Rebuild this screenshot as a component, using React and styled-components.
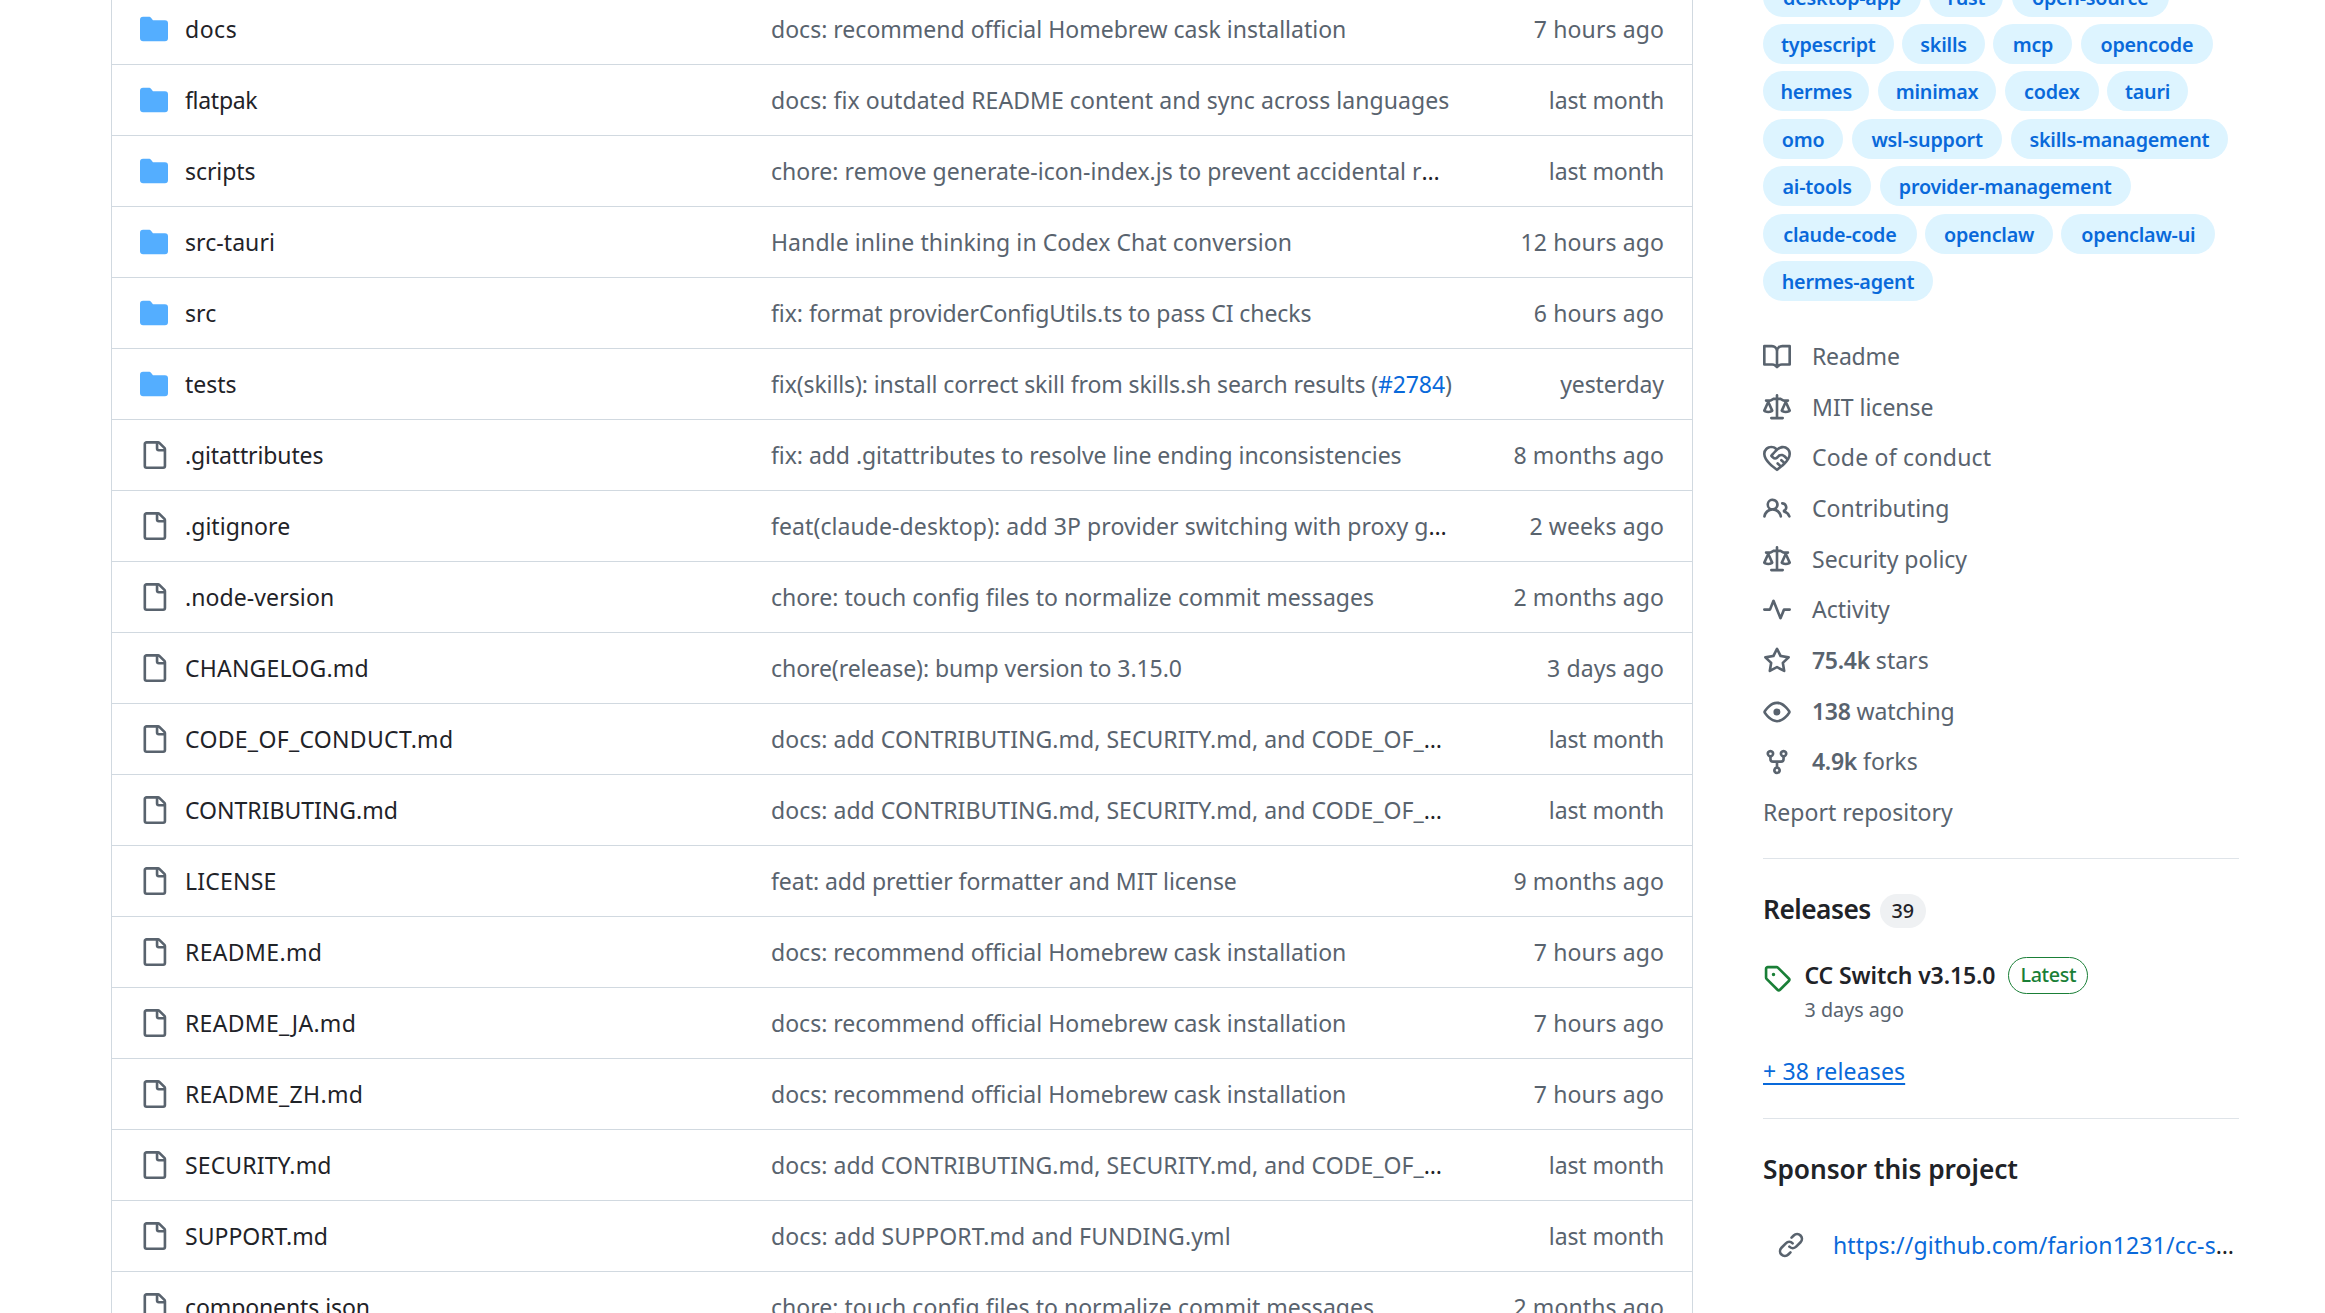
import React from "react";
import styled, { createGlobalStyle } from "styled-components";

const GlobalStyle = createGlobalStyle`
  * {
    box-sizing: border-box;
  }
  body {
    margin: 0;
    background: #fff;
    color: #1f2328;
    font-family: "Noto Sans", "Open Sans", sans-serif;
    font-size: 23.03px;
    line-height: 36px;
    overflow: hidden;
  }
`;

const Page = styled.div`
  display: flex;
  gap: 70px;
  height: 1313px;
  padding-left: 111px;
  overflow: hidden;
`;

const FileTable = styled.div`
  width: 1582px;
  height: 1355px;
  flex: none;
  margin-top: -6px;
  border: 1px solid #d1d9e0;
  border-width: 0 1px;
`;

const FileRow = styled.div`
  display: grid;
  grid-template-columns: 29px 570px 1fr 180px;
  column-gap: 16px;
  align-items: center;
  height: 71px;
  padding: 0 28px;
  border-bottom: 1px solid #d1d9e0;
`;

const Tracked = styled.span`
  letter-spacing: ${({ $track }) => $track || 0}px;
  white-space: nowrap;
`;

const Message = styled.div`
  white-space: nowrap;
`;

const Muted = styled(Tracked)`
  color: #59636e;
`;

const Age = styled(Muted)`
  text-align: right;
`;

const Link = styled.a`
  color: #0969da;
  letter-spacing: ${({ $track }) => ($track ? `${$track}px` : "inherit")};
`;

const Svg = styled.svg`
  display: block;
  flex: none;
  width: 28px;
  height: 28px;
  fill: ${({ $color }) => $color || "#59636e"};
`;

const Sidebar = styled.aside`
  width: 476px;
  flex: none;
`;

const Topics = styled.div`
  display: flex;
  flex-wrap: wrap;
  gap: 7.4px 8.4px;
  margin-top: -23.4px;
`;

const Topic = styled.a`
  width: ${({ $width }) => $width}px;
  height: 40px;
  padding-top: 1px;
  border-radius: 20px;
  background: #ddf4ff;
  color: #0969da;
  font-size: 19.74px;
  font-weight: 600;
  line-height: 40px;
  letter-spacing: -0.23px;
  text-align: center;
  white-space: nowrap;
`;

const InfoList = styled.div`
  margin-top: 30.6px;
`;

const InfoRow = styled.div`
  display: flex;
  align-items: center;
  gap: 21px;
  height: 50.7px;
  color: #59636e;
  & > span {
    margin-top: -2px;
  }
  & b {
    font-weight: 600;
    letter-spacing: -0.3px;
  }
`;

const Section = styled.section`
  height: ${({ $height }) => $height}px;
  margin-top: ${({ $gap }) => $gap || 0}px;
  border-top: 1px solid #dfe4e9;
`;

const Heading = styled.h2`
  display: flex;
  align-items: center;
  gap: 9px;
  height: 36px;
  margin: 32px 0 0;
  font-size: 26.3px;
  font-weight: 600;
  letter-spacing: ${({ $track }) => $track}px;
`;

const Counter = styled.span`
  width: 46px;
  height: 34px;
  margin-top: 4px;
  border-radius: 17px;
  background: #eff1f3;
  font-size: 19.74px;
  font-weight: 500;
  line-height: 34px;
  letter-spacing: 0;
  text-align: center;
`;

const Release = styled.div`
  display: flex;
  gap: 13.5px;
  margin-top: 30px;
  & > svg {
    margin-top: 7px;
  }
`;

const ReleaseTitle = styled.div`
  display: flex;
  align-items: center;
  gap: 13px;
  height: 37px;
  font-weight: 600;
`;

const Latest = styled.span`
  width: 80px;
  height: 37px;
  border: 1px solid #1a7f37;
  border-radius: 19px;
  color: #1a7f37;
  font-size: 19.74px;
  font-weight: 500;
  line-height: 33px;
  letter-spacing: -0.4px;
  text-align: center;
`;

const ReleaseDate = styled.div`
  color: #59636e;
  font-size: 19.74px;
  line-height: 32px;
`;

const MoreLink = styled.a`
  display: block;
  width: fit-content;
  margin-top: 27.5px;
  color: #0969da;
  letter-spacing: 0.14px;
  text-decoration: underline;
  text-decoration-thickness: 2px;
  text-underline-offset: 3px;
`;

const SponsorRow = styled.div`
  display: flex;
  align-items: center;
  gap: 28px;
  margin-top: 40.5px;
  padding-left: 14px;
  white-space: nowrap;
`;

const paths = {
  folder:
    "M1.75 1A1.75 1.75 0 0 0 0 2.75v10.5C0 14.216.784 15 1.75 15h12.5A1.75 1.75 0 0 0 16 13.25v-8.5A1.75 1.75 0 0 0 14.25 3H7.5a.25.25 0 0 1-.2-.1l-.9-1.2C6.07 1.26 5.55 1 5 1H1.75Z",
  file: "M2 1.75C2 .784 2.784 0 3.75 0h6.586c.464 0 .909.184 1.237.513l2.914 2.914c.329.328.513.773.513 1.237v9.586A1.75 1.75 0 0 1 13.25 16h-9.5A1.75 1.75 0 0 1 2 14.25Zm1.75-.25a.25.25 0 0 0-.25.25v12.5c0 .138.112.25.25.25h9.5a.25.25 0 0 0 .25-.25V6h-2.75A1.75 1.75 0 0 1 9 4.25V1.5Zm6.75.062V4.25c0 .138.112.25.25.25h2.688l-.011-.013-2.914-2.914-.013-.011Z",
  book: "M0 1.75A.75.75 0 0 1 .75 1h4.253c1.227 0 2.317.59 3 1.501A3.743 3.743 0 0 1 11.006 1h4.245a.75.75 0 0 1 .75.75v10.5a.75.75 0 0 1-.75.75h-4.507a2.25 2.25 0 0 0-1.591.659l-.622.621a.75.75 0 0 1-1.06 0l-.622-.621A2.25 2.25 0 0 0 5.258 13H.75a.75.75 0 0 1-.75-.75Zm7.251 10.324.004-5.073-.002-2.253A2.25 2.25 0 0 0 5.003 2.5H1.5v9h3.757a3.75 3.75 0 0 1 1.994.574ZM8.755 4.75l-.004 7.322a3.752 3.752 0 0 1 1.992-.572H14.5v-9h-3.495a2.25 2.25 0 0 0-2.25 2.25Z",
  law: "M8.75.75V2h.985c.304 0 .603.08.867.231l1.29.736c.038.022.08.033.124.033h2.234a.75.75 0 0 1 0 1.5h-.427l2.111 4.692a.75.75 0 0 1-.154.838l-.53-.53.529.531-.001.002-.002.002-.006.006-.006.005-.01.01-.045.04c-.21.176-.441.327-.686.45C14.556 10.78 13.88 11 13 11a4.498 4.498 0 0 1-2.023-.454 3.544 3.544 0 0 1-.686-.45l-.045-.04-.016-.015-.006-.006-.004-.004v-.001a.75.75 0 0 1-.154-.838L12.178 4.5h-.162c-.305 0-.604-.079-.868-.231l-1.29-.736a.245.245 0 0 0-.124-.033H8.75V13h2.5a.75.75 0 0 1 0 1.5h-6.5a.75.75 0 0 1 0-1.5h2.5V3.5h-.984a.245.245 0 0 0-.124.033l-1.289.737c-.265.15-.564.23-.869.23h-.162l2.112 4.692a.75.75 0 0 1-.154.838l-.53-.53.529.531-.001.002-.002.002-.006.006-.016.015-.045.04c-.21.176-.441.327-.686.45C4.556 10.78 3.88 11 3 11a4.498 4.498 0 0 1-2.023-.454 3.544 3.544 0 0 1-.686-.45l-.045-.04-.016-.015-.006-.006-.004-.004v-.001a.75.75 0 0 1-.154-.838L2.178 4.5H1.75a.75.75 0 0 1 0-1.5h2.234a.249.249 0 0 0 .125-.033l1.288-.737c.265-.15.564-.23.869-.23h.984V.75a.75.75 0 0 1 1.5 0Zm2.945 8.477c.285.135.718.273 1.305.273s1.02-.138 1.305-.273L13 6.327Zm-10 0c.285.135.718.273 1.305.273s1.02-.138 1.305-.273L3 6.327Z",
  conduct:
    "M8.048 2.241c.964-.709 2.079-1.238 3.325-1.241a4.616 4.616 0 0 1 3.282 1.355c.41.408.757.86.996 1.428.238.568.348 1.206.347 1.968 0 2.193-1.505 4.254-3.081 5.862-1.496 1.526-3.213 2.796-4.249 3.563l-.22.163a.749.749 0 0 1-.895 0l-.221-.163c-1.036-.767-2.753-2.037-4.249-3.563C1.51 10.008.007 7.952.002 5.762a4.614 4.614 0 0 1 1.353-3.407C3.123.585 6.223.537 8.048 2.24Zm-1.153.983c-1.25-1.033-3.321-.967-4.48.191a3.115 3.115 0 0 0-.913 2.335c0 1.556 1.109 3.24 2.652 4.813C5.463 11.898 6.96 13.032 8 13.805c.353-.262.758-.565 1.191-.905l-1.326-1.223a.75.75 0 0 1 1.018-1.102l1.48 1.366c.328-.281.659-.577.984-.887L9.99 9.802a.75.75 0 1 1 1.019-1.103l1.384 1.28c.295-.329.566-.661.81-.995L12.92 8.7l-1.167-1.168c-.674-.671-1.78-.664-2.474.03-.268.269-.538.537-.802.797-.893.882-2.319.843-3.185-.032-.346-.35-.693-.697-1.043-1.047a.75.75 0 0 1-.04-1.016c.162-.191.336-.401.52-.623.62-.748 1.356-1.637 2.166-2.417Zm7.112 4.442c.313-.65.491-1.293.491-1.916v-.001c0-.614-.088-1.045-.23-1.385-.143-.339-.357-.633-.673-.949a3.111 3.111 0 0 0-2.218-.915c-1.092.003-2.165.627-3.226 1.602-.823.755-1.554 1.637-2.228 2.45l-.127.154.562.566a.755.755 0 0 0 1.066.02l.794-.79c1.258-1.258 3.312-1.31 4.594-.032.396.394.792.791 1.173 1.173Z",
  people:
    "M2 5.5a3.5 3.5 0 1 1 5.898 2.549 5.508 5.508 0 0 1 3.034 4.084.75.75 0 1 1-1.482.235 4 4 0 0 0-7.9 0 .75.75 0 0 1-1.482-.236A5.507 5.507 0 0 1 3.102 8.05 3.493 3.493 0 0 1 2 5.5ZM11 4a3.001 3.001 0 0 1 2.22 5.018 5.01 5.01 0 0 1 2.56 3.012.749.749 0 0 1-.885.954.752.752 0 0 1-.549-.514 3.507 3.507 0 0 0-2.522-2.372.75.75 0 0 1-.574-.73v-.352a.75.75 0 0 1 .416-.672A1.5 1.5 0 0 0 11 5.5.75.75 0 0 1 11 4Zm-5.5-.5a2 2 0 1 0-.001 3.999A2 2 0 0 0 5.5 3.5Z",
  pulse:
    "M6 2c.306 0 .582.187.696.471L10 10.731l1.304-3.26A.751.751 0 0 1 12 7h3.25a.75.75 0 0 1 0 1.5h-2.742l-1.812 4.528a.751.751 0 0 1-1.392 0L6 4.77 4.696 8.03A.75.75 0 0 1 4 8.5H.75a.75.75 0 0 1 0-1.5h2.742l1.812-4.529A.751.751 0 0 1 6 2Z",
  star: "M8 .25a.75.75 0 0 1 .673.418l1.882 3.815 4.21.612a.75.75 0 0 1 .416 1.279l-3.046 2.97.719 4.192a.751.751 0 0 1-1.088.791L8 12.347l-3.766 1.98a.75.75 0 0 1-1.088-.79l.72-4.194L.818 6.374a.75.75 0 0 1 .416-1.28l4.21-.611L7.327.668A.75.75 0 0 1 8 .25Zm0 2.445L6.615 5.5a.75.75 0 0 1-.564.41l-3.097.45 2.24 2.184a.75.75 0 0 1 .216.664l-.528 3.084 2.769-1.456a.75.75 0 0 1 .698 0l2.77 1.456-.53-3.084a.75.75 0 0 1 .216-.664l2.24-2.183-3.096-.45a.75.75 0 0 1-.564-.41L8 2.694Z",
  eye: "M8 2c1.981 0 3.671.992 4.933 2.078 1.27 1.091 2.187 2.345 2.637 3.023a1.62 1.62 0 0 1 0 1.798c-.45.678-1.367 1.932-2.637 3.023C11.67 13.008 9.981 14 8 14c-1.981 0-3.671-.992-4.933-2.078C1.797 10.83.88 9.576.43 8.898a1.62 1.62 0 0 1 0-1.798c.45-.677 1.367-1.931 2.637-3.022C4.33 2.992 6.019 2 8 2ZM1.679 7.932a.12.12 0 0 0 0 .136c.411.622 1.241 1.75 2.366 2.717C5.176 11.758 6.527 12.5 8 12.5c1.473 0 2.825-.742 3.955-1.715 1.124-.967 1.954-2.096 2.366-2.717a.12.12 0 0 0 0-.136c-.412-.621-1.242-1.75-2.366-2.717C10.824 4.242 9.473 3.5 8 3.5c-1.473 0-2.825.742-3.955 1.715-1.124.967-1.954 2.096-2.366 2.717ZM8 10a2 2 0 1 1-.001-3.999A2 2 0 0 1 8 10Z",
  fork: "M5 5.372v.878c0 .414.336.75.75.75h4.5a.75.75 0 0 0 .75-.75v-.878a2.25 2.25 0 1 1 1.5 0v.878a2.25 2.25 0 0 1-2.25 2.25h-1.5v2.128a2.251 2.251 0 1 1-1.5 0V8.5h-1.5A2.25 2.25 0 0 1 3.5 6.25v-.878a2.25 2.25 0 1 1 1.5 0ZM5 3.25a.75.75 0 1 0-1.5 0 .75.75 0 0 0 1.5 0Zm6.75.75a.75.75 0 1 0 0-1.5.75.75 0 0 0 0 1.5Zm-3 8.75a.75.75 0 1 0-1.5 0 .75.75 0 0 0 1.5 0Z",
  tag: "M1 7.775V2.75C1 1.784 1.784 1 2.75 1h5.025c.464 0 .91.184 1.238.513l6.25 6.25a1.75 1.75 0 0 1 0 2.474l-5.026 5.026a1.75 1.75 0 0 1-2.474 0l-6.25-6.25A1.752 1.752 0 0 1 1 7.775Zm1.5 0c0 .066.026.13.073.177l6.25 6.25a.25.25 0 0 0 .354 0l5.025-5.025a.25.25 0 0 0 0-.354l-6.25-6.25a.25.25 0 0 0-.177-.073H2.75a.25.25 0 0 0-.25.25ZM6 5a1 1 0 1 1 0 2 1 1 0 0 1 0-2Z",
  link: "m7.775 3.275 1.25-1.25a3.5 3.5 0 1 1 4.95 4.95l-2.5 2.5a3.5 3.5 0 0 1-4.95 0 .751.751 0 0 1 .018-1.042.751.751 0 0 1 1.042-.018 1.998 1.998 0 0 0 2.83 0l2.5-2.5a2.002 2.002 0 0 0-2.83-2.83l-1.25 1.25a.751.751 0 0 1-1.042-.018.751.751 0 0 1-.018-1.042Zm-4.69 9.64a1.998 1.998 0 0 0 2.83 0l1.25-1.25a.751.751 0 0 1 1.042.018.751.751 0 0 1 .018 1.042l-1.25 1.25a3.5 3.5 0 1 1-4.95-4.95l2.5-2.5a3.5 3.5 0 0 1 4.95 0 .751.751 0 0 1-.018 1.042.751.751 0 0 1-1.042.018 1.998 1.998 0 0 0-2.83 0l-2.5 2.5a1.998 1.998 0 0 0 0 2.83Z",
};

const Icon = ({ name, color }) => (
  <Svg viewBox="0 0 16 16" $color={color}>
    <path d={paths[name]} />
  </Svg>
);

const homebrew = "docs: recommend official Homebrew cask installation";
const policies = "docs: add CONTRIBUTING.md, SECURITY.md, and CODE_OF_";
const touch = "chore: touch config files to normalize commit messages";

// track: letter-spacing of the name, msgTrack: letter-spacing of the message
const files = [
  { dir: true, name: "docs", track: 0.5, msg: homebrew, age: "7 hours ago" },
  {
    dir: true,
    name: "flatpak",
    track: -0.3,
    msg: "docs: fix outdated README content and sync across languages",
    msgTrack: 0.05,
    age: "last month",
  },
  {
    dir: true,
    name: "scripts",
    track: -0.08,
    msg: "chore: remove generate-icon-index.js to prevent accidental r",
    msgTrack: 0.03,
    cut: true,
    age: "last month",
  },
  {
    dir: true,
    name: "src-tauri",
    track: 0.06,
    msg: "Handle inline thinking in Codex Chat conversion",
    msgTrack: 0.07,
    age: "12 hours ago",
  },
  {
    dir: true,
    name: "src",
    track: 0.06,
    msg: "fix: format providerConfigUtils.ts to pass CI checks",
    msgTrack: -0.06,
    age: "6 hours ago",
  },
  {
    dir: true,
    name: "tests",
    msg: "fix(skills): install correct skill from skills.sh search results (",
    msgTrack: -0.106,
    issue: "#2784",
    age: "yesterday",
  },
  {
    name: ".gitattributes",
    track: -0.14,
    msg: "fix: add .gitattributes to resolve line ending inconsistencies",
    msgTrack: -0.055,
    age: "8 months ago",
  },
  {
    name: ".gitignore",
    track: 0.03,
    msg: "feat(claude-desktop): add 3P provider switching with proxy g",
    msgTrack: 0.075,
    cut: true,
    age: "2 weeks ago",
  },
  { name: ".node-version", track: 0.08, msg: touch, msgTrack: 0.022, age: "2 months ago" },
  {
    name: "CHANGELOG.md",
    track: 0.2,
    msg: "chore(release): bump version to 3.15.0",
    msgTrack: -0.07,
    age: "3 days ago",
  },
  {
    name: "CODE_OF_CONDUCT.md",
    track: 0.3,
    msg: policies,
    msgTrack: 0.03,
    cut: true,
    age: "last month",
  },
  { name: "CONTRIBUTING.md", msg: policies, msgTrack: 0.03, cut: true, age: "last month" },
  {
    name: "LICENSE",
    track: 0.2,
    msg: "feat: add prettier formatter and MIT license",
    msgTrack: -0.06,
    age: "9 months ago",
  },
  { name: "README.md", track: 0.35, msg: homebrew, age: "7 hours ago" },
  { name: "README_JA.md", track: 0.3, msg: homebrew, age: "7 hours ago" },
  { name: "README_ZH.md", track: 0.3, msg: homebrew, age: "7 hours ago" },
  {
    name: "SECURITY.md",
    track: 0.125,
    msg: policies,
    msgTrack: 0.03,
    cut: true,
    age: "last month",
  },
  {
    name: "SUPPORT.md",
    msg: "docs: add SUPPORT.md and FUNDING.yml",
    msgTrack: 0.1,
    age: "last month",
  },
  { name: "components.json", track: -0.12, msg: touch, msgTrack: 0.022, age: "2 months ago" },
];

const topics = [
  ["desktop-app", 158],
  ["rust", 74],
  ["open-source", 157],
  ["typescript", 130.7],
  ["skills", 83],
  ["mcp", 79],
  ["opencode", 132],
  ["hermes", 106.3],
  ["minimax", 118.8],
  ["codex", 93.8],
  ["tauri", 81],
  ["omo", 80.3],
  ["wsl-support", 150.8],
  ["skills-management", 217],
  ["ai-tools", 108.3],
  ["provider-management", 251],
  ["claude-code", 153.8],
  ["openclaw", 127.8],
  ["openclaw-ui", 154],
  ["hermes-agent", 170],
];

const info = [
  { icon: "book", text: "Readme", track: -0.2 },
  { icon: "law", text: "MIT license" },
  { icon: "conduct", text: "Code of conduct", track: 0.2 },
  { icon: "people", text: "Contributing" },
  { icon: "law", text: "Security policy" },
  { icon: "pulse", text: "Activity" },
  { icon: "star", count: "75.4k", text: " stars" },
  { icon: "eye", count: "138", text: " watching", track: -0.1 },
  { icon: "fork", count: "4.9k", text: " forks" },
  { text: "Report repository" },
];

const App = () => {
  return (
    <>
      <GlobalStyle />
      <Page>
        <FileTable>
          {files.map(({ dir, name, track, msg, msgTrack, issue, cut, age }) => (
            <FileRow key={name}>
              <Icon name={dir ? "folder" : "file"} color={dir && "#54aeff"} />
              <Tracked $track={track}>{name}</Tracked>
              <Message>
                <Muted $track={msgTrack}>
                  {msg}
                  {issue && <Link>{issue}</Link>}
                  {issue && ")"}
                </Muted>
                {cut && "…"}
              </Message>
              <Age $track={/^\d/.test(age) ? 0.1 : -0.12}>{age}</Age>
            </FileRow>
          ))}
        </FileTable>
        <Sidebar>
          <Topics>
            {topics.map(([label, width]) => (
              <Topic key={label} $width={width}>
                {label}
              </Topic>
            ))}
          </Topics>
          <InfoList>
            {info.map(({ icon, count, text, track }) => (
              <InfoRow key={text}>
                {icon && <Icon name={icon} />}
                <Tracked $track={track}>
                  {count && <b>{count}</b>}
                  {text}
                </Tracked>
              </InfoRow>
            ))}
          </InfoList>
          <Section $gap={19.4} $height={260}>
            <Heading $track={-0.5}>
              Releases <Counter>39</Counter>
            </Heading>
            <Release>
              <Icon name="tag" color="#1a7f37" />
              <div>
                <ReleaseTitle>
                  <Tracked $track={-0.11}>CC Switch v3.15.0</Tracked>
                  <Latest>Latest</Latest>
                </ReleaseTitle>
                <ReleaseDate>3 days ago</ReleaseDate>
              </div>
            </Release>
            <MoreLink>+ 38 releases</MoreLink>
          </Section>
          <Section $height={194}>
            <Heading $track={-0.07}>Sponsor this project</Heading>
            <SponsorRow>
              <Icon name="link" />
              <div>
                <Link $track={0.15}>https://github.com/farion1231/cc-s</Link>…
              </div>
            </SponsorRow>
          </Section>
        </Sidebar>
      </Page>
    </>
  );
};

export default App;
